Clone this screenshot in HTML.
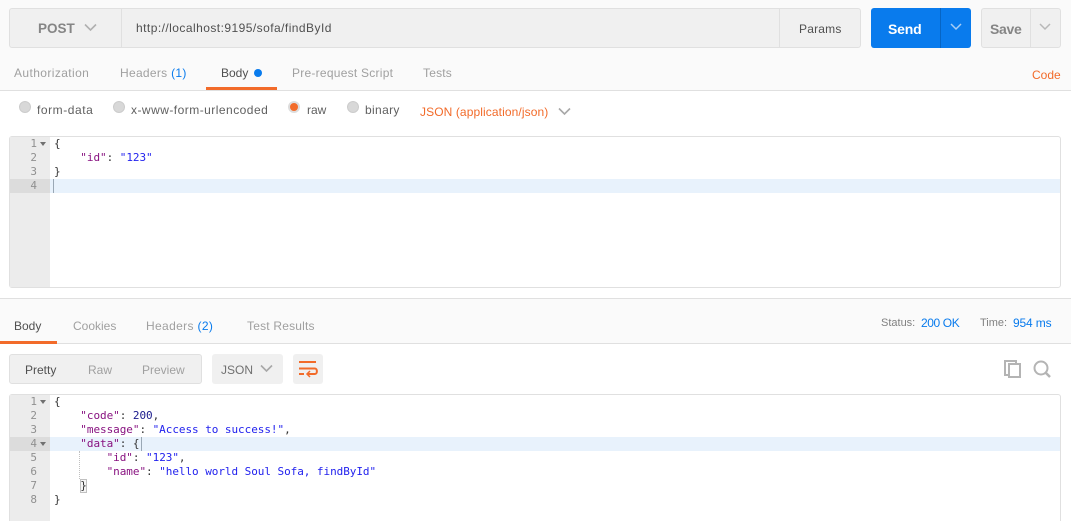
<!DOCTYPE html>
<html>
<head>
<meta charset="utf-8">
<style>
html,body{margin:0;padding:0;background:#fff}
#p{position:relative;width:1075px;height:521px;overflow:hidden;background:#fff;font-family:"Liberation Sans",sans-serif;font-size:12px;color:#808080}
#p div,#p span.a,#p svg{position:absolute}
.t{white-space:nowrap;line-height:16px;height:16px}
.d{color:#505050}
.b{color:#097bed}
.o{color:#f26b2a}
.code{font-family:"DejaVu Sans Mono","Liberation Mono",monospace;font-size:11px;letter-spacing:-.05px;line-height:14px;white-space:pre;color:#333}
.num{font-family:"DejaVu Sans Mono","Liberation Mono",monospace;font-size:11px;line-height:14px;color:#909090;text-align:right;width:28px;left:9px}
.k{color:#881280}
.s{color:#2222ee}
.n{color:#1a1a8c}
.r{width:12px;height:12px;border-radius:50%;background:#d8d8d8;border:1px solid #cccccc;box-sizing:border-box}
</style>
</head>
<body>
<div id="p">
<div style="left:0;top:0;width:1071px;height:90px;background:#fafafa"></div>
<div style="left:0;top:90px;width:1071px;height:1px;background:#e0e0e0"></div>

<div style="left:9px;top:8px;width:852px;height:40px;box-sizing:border-box;background:#f0f0f0;border:1px solid #e0e0e0;border-radius:3px"></div>
<div style="left:121px;top:9px;width:1px;height:38px;background:#e0e0e0"></div>
<div style="left:779px;top:9px;width:1px;height:38px;background:#e0e0e0"></div>
<div class="t" style="left:38px;top:21px;font-size:13.5px;font-weight:bold;color:#858585">POST</div>
<svg style="left:84px;top:23px" width="13" height="9"><path d="M1 1.5L6.5 7L12 1.5" fill="none" stroke="#b0b0b0" stroke-width="1.6"/></svg>
<div class="t" style="left:136px;top:20px;color:#505050;font-size:12px;letter-spacing:.45px">http://localhost:9195/sofa/findById</div>
<div class="t" style="left:799px;top:21px;color:#505050;font-size:12px;letter-spacing:.2px">Params</div>

<div style="left:871px;top:8px;width:100px;height:40px;background:#097bed;border-radius:3px"></div>
<div style="left:940px;top:8px;width:1px;height:40px;background:#0665c4"></div>
<div class="t" style="left:888px;top:21px;color:#fff;font-size:14px;font-weight:bold;letter-spacing:-.2px">Send</div>
<svg style="left:950px;top:23px" width="12" height="8"><path d="M1 1L6 6L11 1" fill="none" stroke="#a8cdf5" stroke-width="1.5"/></svg>

<div style="left:981px;top:8px;width:80px;height:40px;box-sizing:border-box;background:#f0f0f0;border:1px solid #e0e0e0;border-radius:3px"></div>
<div style="left:1030px;top:9px;width:1px;height:38px;background:#e0e0e0"></div>
<div class="t" style="left:990px;top:21px;color:#858585;font-size:14px;font-weight:bold;letter-spacing:-.3px">Save</div>
<svg style="left:1039px;top:23px" width="12" height="8"><path d="M1 1L6 6L11 1" fill="none" stroke="#b8b8b8" stroke-width="1.5"/></svg>

<div class="t" style="left:14px;top:65px;color:#a0a0a0;letter-spacing:.4px">Authorization</div>
<div class="t" style="left:120px;top:65px;color:#a0a0a0;letter-spacing:.3px">Headers <span class="b">(1)</span></div>
<div class="t d" style="left:221px;top:65px">Body</div>
<div style="left:254px;top:69px;width:8px;height:8px;border-radius:50%;background:#097bed"></div>
<div class="t" style="left:292px;top:65px;color:#a0a0a0;letter-spacing:.25px">Pre-request Script</div>
<div class="t" style="left:423px;top:65px;color:#a0a0a0;letter-spacing:.2px">Tests</div>
<div style="left:206px;top:87px;width:71px;height:3px;background:#f26b2a"></div>
<div class="t o" style="left:1032px;top:67px">Code</div>

<div class="r" style="left:19px;top:101px"></div>
<div class="t" style="left:37px;top:102px;color:#606060;letter-spacing:.55px">form-data</div>
<div class="r" style="left:113px;top:101px"></div>
<div class="t" style="left:131px;top:102px;color:#606060;letter-spacing:.47px">x-www-form-urlencoded</div>
<div class="r" style="left:288px;top:101px;background:#f26b2a;border:2px solid #ddd"></div>
<div class="t" style="left:307px;top:102px;color:#606060">raw</div>
<div class="r" style="left:347px;top:101px"></div>
<div class="t" style="left:365px;top:102px;color:#606060;letter-spacing:.35px">binary</div>
<div class="t o" style="left:420px;top:104px;letter-spacing:.1px">JSON (application/json)</div>
<svg style="left:558px;top:107px" width="13" height="9"><path d="M1 1.5L6.500 7L12 1.500" fill="none" stroke="#a8a8a8" stroke-width="1.6"/></svg>

<div style="left:9px;top:136px;width:1052px;height:152px;box-sizing:border-box;border:1px solid #e0e0e0;border-radius:3px"></div>
<div style="left:10px;top:137px;width:40px;height:150px;background:#ececec"></div>
<div style="left:10px;top:179px;width:40px;height:14px;background:#dcdcdc"></div>
<div style="left:50px;top:179px;width:1010px;height:14px;background:#e8f2fc"></div>
<div style="left:53px;top:179px;width:1px;height:14px;background:#9aa8b5"></div>
<div class="num" style="top:137px">1<br>2<br>3<br>4</div>
<svg style="left:40px;top:142px" width="6" height="5"><path d="M0 0H6L3 4Z" fill="#707070"/></svg>
<div class="code" style="left:54px;top:137px">{
    <span class="k">"id"</span>: <span class="s">"123"</span>
}</div>

<div style="left:0;top:298px;width:1071px;height:1px;background:#e0e0e0"></div>
<div style="left:0;top:299px;width:1071px;height:45px;background:#fafafa"></div>
<div style="left:0;top:343px;width:1071px;height:1px;background:#e0e0e0"></div>
<div style="left:0;top:341px;width:57px;height:3px;background:#f26b2a"></div>
<div class="t d" style="left:14px;top:318px">Body</div>
<div class="t" style="left:73px;top:318px;color:#a0a0a0">Cookies</div>
<div class="t" style="left:146px;top:318px;color:#a0a0a0;letter-spacing:.35px">Headers <span class="b">(2)</span></div>
<div class="t" style="left:247px;top:318px;color:#a0a0a0;letter-spacing:.2px">Test Results</div>
<div class="t" style="left:881px;top:315px;font-size:11px;color:#808080">Status:</div>
<div class="t b" style="left:921px;top:315px;letter-spacing:-.4px">200 OK</div>
<div class="t" style="left:980px;top:315px;font-size:11px;color:#808080">Time:</div>
<div class="t b" style="left:1013px;top:315px;letter-spacing:-.15px">954 ms</div>

<div style="left:9px;top:354px;width:193px;height:30px;box-sizing:border-box;background:#f0f0f0;border:1px solid #e0e0e0;border-radius:3px"></div>
<div class="t d" style="left:25px;top:362px">Pretty</div>
<div class="t" style="left:88px;top:362px;color:#a0a0a0">Raw</div>
<div class="t" style="left:142px;top:362px;color:#a0a0a0">Preview</div>
<div style="left:212px;top:354px;width:71px;height:30px;background:#f0f0f0;border-radius:3px"></div>
<div class="t" style="left:221px;top:362px;color:#707070">JSON</div>
<svg style="left:260px;top:364px" width="13" height="9"><path d="M1 1.500L6.500 7L12 1.500" fill="none" stroke="#a8a8a8" stroke-width="1.6"/></svg>
<div style="left:293px;top:354px;width:30px;height:30px;background:#f0f0f0;border-radius:3px"></div>
<svg style="left:298px;top:360px" width="20" height="18"><path d="M1 2H18M1 8.500H17C19.500 8.500 19.500 14 17 14H10M1 14H6" fill="none" stroke="#f26b2a" stroke-width="2"/><path d="M12 11L9 14L12 17" fill="none" stroke="#f26b2a" stroke-width="1.500"/></svg>

<svg style="left:1003px;top:359px" width="19" height="20"><path d="M5 16H2V2H13V5" fill="none" stroke="#b4b4b4" stroke-width="2"/><rect x="6" y="5" width="11" height="13" fill="none" stroke="#b4b4b4" stroke-width="2"/></svg>
<svg style="left:1032px;top:359px" width="20" height="20"><circle cx="9" cy="9" r="6.500" fill="none" stroke="#b4b4b4" stroke-width="2"/><path d="M13.500 13.500L18 18" stroke="#b4b4b4" stroke-width="2.500"/></svg>

<div style="left:9px;top:394px;width:1052px;height:127px;box-sizing:border-box;border:1px solid #e0e0e0;border-bottom:0;border-radius:3px 3px 0 0"></div>
<div style="left:10px;top:395px;width:40px;height:126px;background:#ececec"></div>
<div style="left:10px;top:437px;width:40px;height:14px;background:#dcdcdc"></div>
<div style="left:50px;top:437px;width:1010px;height:14px;background:#e8f2fc"></div>
<div class="num" style="top:395px">1<br>2<br>3<br>4<br>5<br>6<br>7<br>8</div>
<svg style="left:40px;top:400px" width="6" height="5"><path d="M0 0H6L3 4Z" fill="#707070"/></svg>
<svg style="left:40px;top:442px" width="6" height="5"><path d="M0 0H6L3 4Z" fill="#707070"/></svg>
<div style="left:79px;top:451px;width:0;height:28px;border-left:1px dotted #c0c0c0"></div>
<div style="left:80px;top:479px;width:7px;height:14px;box-sizing:border-box;border:1px solid #c0c0c0;background:#f4f4f4"></div>
<div style="left:141px;top:437px;width:1px;height:14px;background:#9aa8b5"></div>
<div class="code" style="left:54px;top:395px">{
    <span class="k">"code"</span>: <span class="n">200</span>,
    <span class="k">"message"</span>: <span class="s">"Access to success!"</span>,
    <span class="k">"data"</span>: {
        <span class="k">"id"</span>: <span class="s">"123"</span>,
        <span class="k">"name"</span>: <span class="s">"hello world Soul Sofa, findById"</span>
    }
}</div>
</div>
</body>
</html>
